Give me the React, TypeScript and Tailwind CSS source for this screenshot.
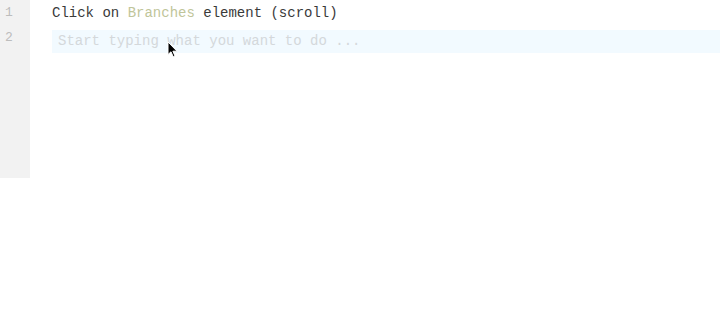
import React from 'react';

const App: React.FC = () => {
  return (
    <div className="w-[720px] h-[326px] bg-white overflow-hidden" style={{ fontFamily: '"Liberation Mono", monospace' }}>
      <div className="flex">
        {/* Gutter */}
        <div className="w-[30px] h-[178px] bg-[#f2f2f2] flex flex-col text-[13px] text-[#bdbdbd] pl-[5px]">
          <div className="h-[26px] leading-[26px]">1</div>
          <div className="h-[24px] leading-[24px]">2</div>
        </div>

        {/* Editor lines */}
        <div className="flex-1 pl-[22px] flex flex-col">
          <div className="h-[27px] leading-[26px] text-[14px] text-[#3a3a3a] whitespace-pre">
            Click on <span className="text-[#bfc59a]">Branches</span> element (scroll)
          </div>
          <div className="h-[23px] leading-[23px] mt-[3px] bg-[#f2faff] pl-[6px] text-[14px] text-[#d4d8db] whitespace-pre relative">
            Start typing what you want to do ...
            <svg className="absolute left-[115px] top-[11px]" width="11" height="17" viewBox="0 0 11 17">
              <path d="M1 1 L1 13.5 L4 10.8 L6.2 15.8 L8 15 L5.9 10.2 L10 10.2 Z" fill="#000" stroke="#fff" strokeWidth="1" />
            </svg>
          </div>
        </div>
      </div>
    </div>
  );
};

export default App;
